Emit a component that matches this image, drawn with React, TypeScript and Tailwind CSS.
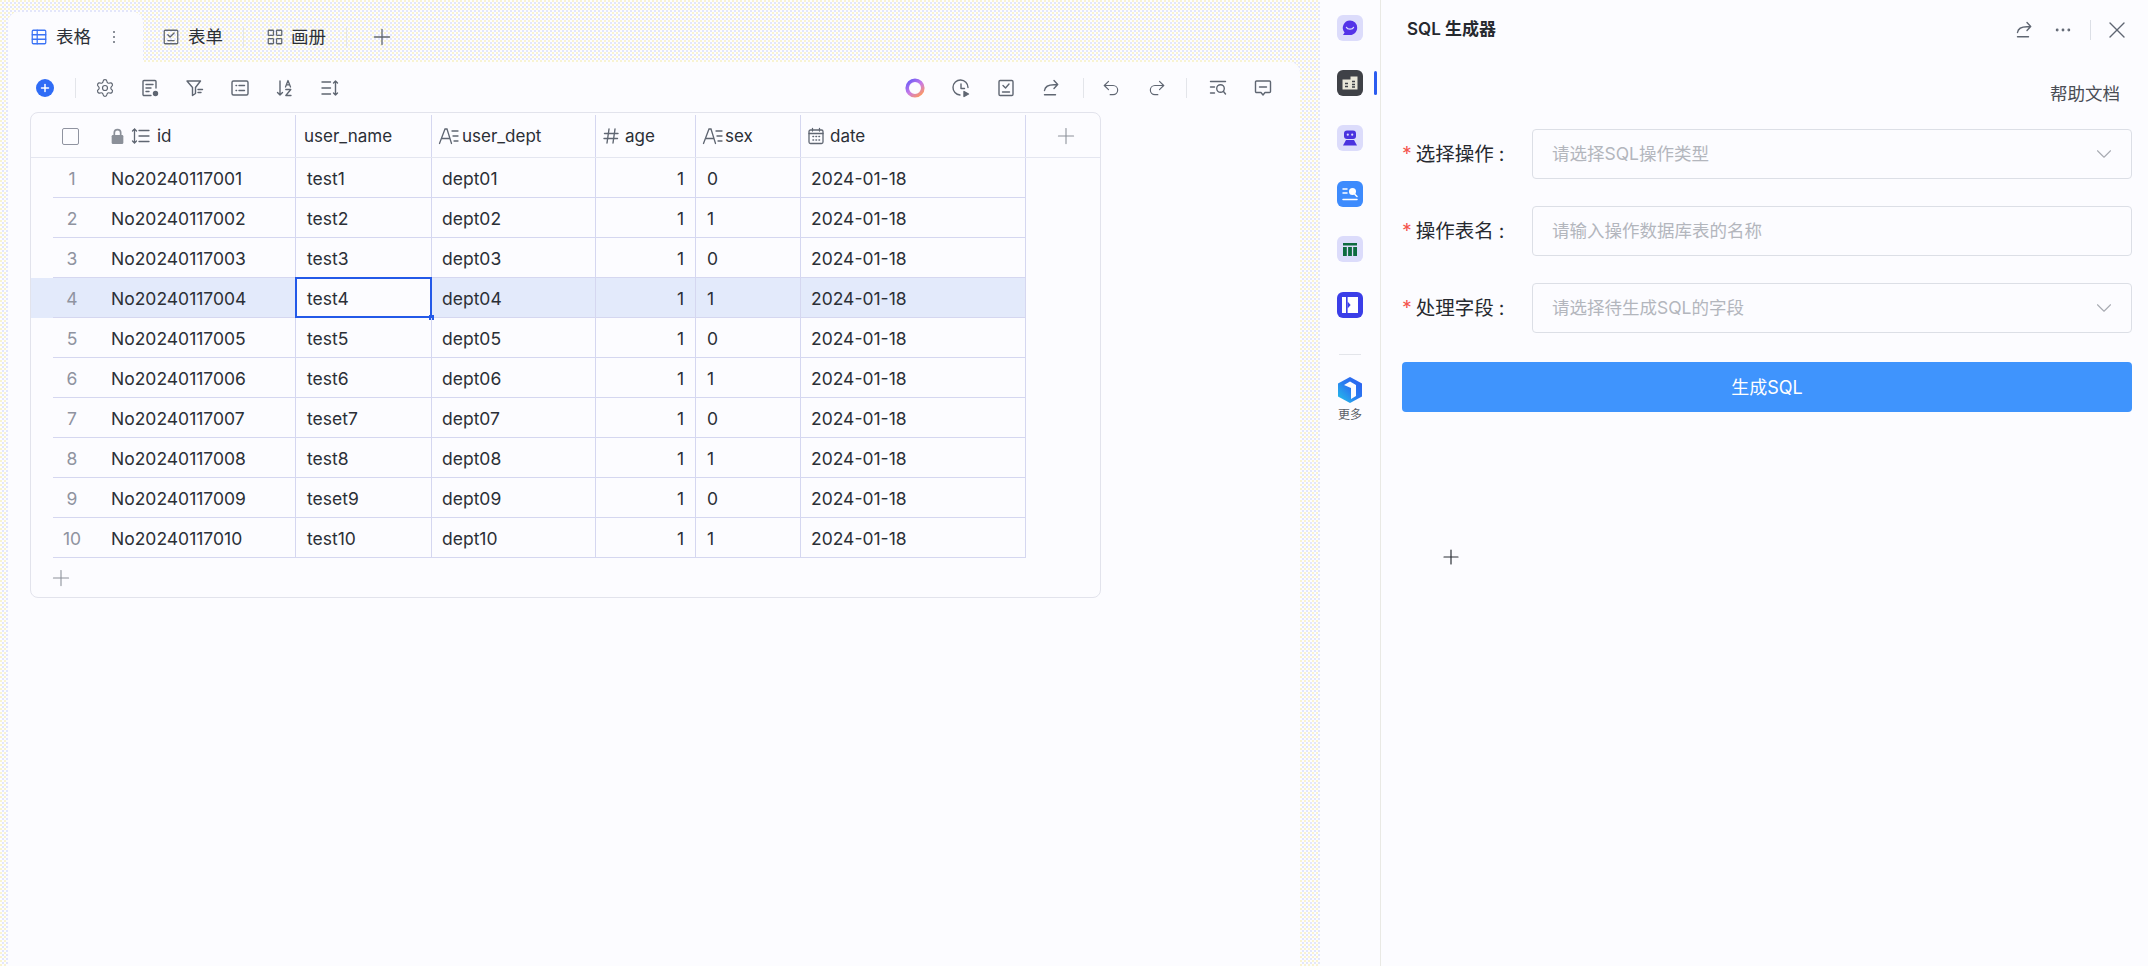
import React from "react";
import { ChevronDown, Ellipsis, Plus, Redo2, Settings, Undo2, X } from "lucide-react";

const FONT = "[font-family:Inter,'Noto_Sans_CJK_SC',sans-serif]";
const DITHER = "bg-[conic-gradient(#fdfdff_25%,#e3e6fb_0_50%,#fdfdff_0_75%,#f8f3d2_0)] bg-[length:4px_4px]";

function Ic({ children, size = 20, className = "text-[#5f6672]" }: { children: React.ReactNode; size?: number; className?: string }) {
  return (
    <svg width={size} height={size} viewBox="0 0 20 20" fill="none" stroke="currentColor" strokeWidth="1.4" strokeLinecap="round" strokeLinejoin="round" className={className + " shrink-0"}>
      {children}
    </svg>
  );
}

const TableIcon = () => (
  <Ic size={18} className="text-[#3b73f5]">
    <rect x="2.5" y="2.5" width="15" height="15" rx="1.2" />
    <path d="M2.5 7.5h15M2.5 12.5h15M8 2.5v15" />
  </Ic>
);
const FormIcon = () => (
  <Ic size={18}>
    <rect x="2.5" y="2.5" width="15" height="15" rx="1.2" />
    <path d="M6.5 7.5l2.5 2.5 4.5-4.5M6.5 14h7" />
  </Ic>
);
const GalleryIcon = () => (
  <Ic size={18}>
    <rect x="2.5" y="2.5" width="5.8" height="5.8" rx="0.8" />
    <rect x="11.7" y="2.5" width="5.8" height="5.8" rx="0.8" />
    <rect x="2.5" y="11.7" width="5.8" height="5.8" rx="0.8" />
    <rect x="11.7" y="11.7" width="5.8" height="5.8" rx="0.8" />
  </Ic>
);
const FieldConfig = () => (
  <Ic>
    <path d="M11 17.5H4a1 1 0 0 1-1-1v-13a1 1 0 0 1 1-1h11a1 1 0 0 1 1 1V10M6 6.5h7M6 10h5M6 13.5h3" />
    <circle cx="15.5" cy="15.500" r="2" fill="currentColor" />
  </Ic>
);
const FilterIcon = () => (
  <Ic>
    <path d="M2 3h13.500L10.500 9.500v6L7.500 17.500V9.500zM13 11.500h4.500M13 14.500h3" />
  </Ic>
);
const ListIcon = () => (
  <Ic>
    <rect x="2" y="3" width="16" height="14" rx="1.500" />
    <path d="M6 7.500h.6M6 12.500h.6M9 7.500h5.500M9 12.500h5.500" />
  </Ic>
);
const SortIcon = () => (
  <Ic>
    <path d="M5 3v14M2.500 14.500l2.500 2.500 2.500-2.500" />
    <path d="M10.500 9l2.500-6.500 2.500 6.500M11.500 6.800h3M10.800 11.500h5l-5 6h5.200" strokeWidth="1.3" />
  </Ic>
);
const RowHeight = () => (
  <Ic>
    <path d="M2 4h8.500M2 10h8.500M2 16h8.500M15.500 3v14M13.500 5l2-2 2 2M13.500 15l2 2 2-2" />
  </Ic>
);
const RingIcon = () => (
  <svg width="22" height="22" viewBox="0 0 22 22" className="shrink-0">
    <defs>
      <linearGradient id="ring" x1="0.1" y1="0" x2="0.9" y2="1">
        <stop offset="0" stopColor="#6e5cf6" />
        <stop offset="0.5" stopColor="#c77ae8" />
        <stop offset="1" stopColor="#ff9a5c" />
      </linearGradient>
    </defs>
    <circle cx="11" cy="11" r="7.800" fill="none" stroke="url(#ring)" strokeWidth="3.600" />
  </svg>
);
const HistoryPlay = () => (
  <Ic>
    <path d="M9 17a7.500 7.500 0 1 1 8-7.500M10 6v4.500h3.500" />
    <path d="M13 13.500l4.500 2.500-4.500 2.500z" fill="currentColor" />
  </Ic>
);
const CheckDoc = () => (
  <Ic>
    <rect x="3" y="2.500" width="14" height="15" rx="1.200" />
    <path d="M7 7.500l2.500 2.500 3.500-4M6.500 14h7" />
  </Ic>
);
const ShareIcon = ({ size = 20 }: { size?: number }) => (
  <Ic size={size}>
    <path d="M3.500 12.500c.5-3.500 4-5.800 9.500-5.800h3.500M13 2.500l3.700 4-3.700 4M3.500 16.800h11" />
  </Ic>
);
const SearchList = () => (
  <Ic>
    <path d="M2.500 3.500h15M2.500 9h4M2.500 15h4" />
    <circle cx="12.500" cy="10.500" r="3.800" />
    <path d="M15.500 13.500l2 2.500" />
  </Ic>
);
const CommentIcon = () => (
  <Ic>
    <path d="M3.500 3h13a1 1 0 0 1 1 1v9.500a1 1 0 0 1-1 1H12l-2 2.500-2-2.500H3.500a1 1 0 0 1-1-1V4a1 1 0 0 1 1-1zM6.500 9h7" />
  </Ic>
);
const TextType = () => (
  <svg width="22" height="18" viewBox="0 0 22 18" fill="none" stroke="#5f6672" strokeWidth="1.300" strokeLinecap="round" className="shrink-0">
    <path d="M1.500 16.500L7 2h2l4.500 14.500M4 11.500h7.500M14 4h6M15 9h5M16 14h4" />
  </svg>
);
const HashType = () => (
  <svg width="18" height="18" viewBox="0 0 18 18" fill="none" stroke="#5f6672" strokeWidth="1.400" strokeLinecap="round" className="shrink-0">
    <path d="M7 2L5 16M13 2l-2 14M2.500 6.500h13.500M2 11.500h13.500" />
  </svg>
);
const DateType = () => (
  <svg width="18" height="18" viewBox="0 0 18 18" fill="none" stroke="#5f6672" strokeWidth="1.300" strokeLinecap="round" className="shrink-0">
    <rect x="2" y="3" width="14" height="13.500" rx="1.500" />
    <path d="M5.500 1.500v2.500M12.500 1.500v2.500M2 6.500h14" />
    <path d="M6 9.500h.5M9 9.500h.5M12 9.500h.5M6 13h.5M9 13h.5M12 13h.5" strokeWidth="1.600" />
  </svg>
);
const IdSort = () => (
  <svg width="20" height="18" viewBox="0 0 20 18" fill="none" stroke="#5f6672" strokeWidth="1.300" strokeLinecap="round" className="shrink-0">
    <path d="M3.500 2v14M1.500 4l2-2 2 2M1.500 14l2 2 2-2M8 3.500h10M8 9h10M8 14.500h10" />
  </svg>
);
const Lock = () => (
  <svg width="15" height="17" viewBox="0 0 14 16" className="shrink-0">
    <path d="M4 7V4.500a3 3 0 0 1 6 0V7" fill="none" stroke="#8b9099" strokeWidth="1.600" />
    <rect x="1.500" y="6.500" width="11" height="8.500" rx="1.200" fill="#8b9099" />
  </svg>
);

const Vline = ({ className = "h-5" }: { className?: string }) => <div className={"w-px bg-[#e3e5ea] " + className} />;

const rows = [
  ["No20240117001", "test1", "dept01", "0"],
  ["No20240117002", "test2", "dept02", "1"],
  ["No20240117003", "test3", "dept03", "0"],
  ["No20240117004", "test4", "dept04", "1"],
  ["No20240117005", "test5", "dept05", "0"],
  ["No20240117006", "test6", "dept06", "1"],
  ["No20240117007", "teset7", "dept07", "0"],
  ["No20240117008", "test8", "dept08", "1"],
  ["No20240117009", "teset9", "dept09", "0"],
  ["No20240117010", "test10", "dept10", "1"],
];

function TabBar() {
  return (
    <div className="flex h-[62px] items-end pl-[8px] text-[17.500px] text-[#2b2f36]">
      <div className="flex h-[50px] w-[135px] items-center rounded-t-[10px] bg-[#fcfcff] pl-[22px]">
        <TableIcon />
        <span className="ml-[8px]">表格</span>
        <span className="ml-[22px] flex flex-col gap-[3px]">
          <i className="block h-[2px] w-[2px] bg-[#8b9099]" />
          <i className="block h-[2px] w-[2px] bg-[#8b9099]" />
          <i className="block h-[2px] w-[2px] bg-[#8b9099]" />
        </span>
      </div>
      <div className="flex h-[50px] items-center">
        <div className="ml-[19px] flex items-center gap-[8px]">
          <FormIcon />
          <span>表单</span>
        </div>
        <Vline className="ml-[20px] h-[20px]" />
        <div className="ml-[22px] flex items-center gap-[7px]">
          <GalleryIcon />
          <span>画册</span>
        </div>
        <Vline className="ml-[20px] h-[20px]" />
        <Plus size={26} strokeWidth={1.200} className="ml-[22px] text-[#5f6672]" />
      </div>
    </div>
  );
}

function Toolbar() {
  return (
    <div className="flex h-[51px] items-center pl-[28px] pr-[27px]">
      <div className="flex h-[18px] w-[18px] items-center justify-center rounded-full bg-[#2f6cf6]">
        <Plus size={12} strokeWidth={3} className="text-white" />
      </div>
      <Vline className="ml-[21px] h-[20px]" />
      <div className="ml-[19px] flex items-center gap-[25px]">
        <Settings size={20} strokeWidth={1.400} className="text-[#5f6672]" />
        <FieldConfig />
        <FilterIcon />
        <ListIcon />
        <SortIcon />
        <RowHeight />
      </div>
      <div className="ml-auto flex items-center">
        <RingIcon />
        <div className="ml-[25px] flex items-center gap-[25px]">
          <HistoryPlay />
          <CheckDoc />
          <ShareIcon />
        </div>
        <Vline className="ml-[22px] h-[20px]" />
        <Undo2 size={20} strokeWidth={1.400} className="ml-[17px] text-[#5f6672]" />
        <Redo2 size={20} strokeWidth={1.400} className="ml-[26px] text-[#5f6672]" />
        <Vline className="ml-[19px] h-[20px]" />
        <div className="ml-[21px] flex items-center gap-[25px]">
          <SearchList />
          <CommentIcon />
        </div>
      </div>
    </div>
  );
}

const colClass = ["w-[243px]", "w-[136px]", "w-[164px]", "w-[100px]", "w-[105px]", "w-[225px]"];
const vb = "border-r border-[#d5d7f0]";
const hb = "border-b border-[#d5d7e3]";

function TableGrid() {
  return (
    <div className="ml-[22px] mt-[-1px] w-[1071px] overflow-hidden rounded-[8px] border border-[#e2e3ec] bg-[#fcfcff] text-[17px] leading-none text-[#2b2f36]">
      <div className="flex h-[45px] border-b border-[#e4e6f0] pt-[2px]">
        <div className="w-[22px] shrink-0" />
        <div className={colClass[0] + " flex shrink-0 items-center " + vb}>
          <div className="ml-[9px] h-[17px] w-[17px] rounded-[2px] border border-[#8f93a0]" />
          <div className="ml-[31px] flex items-center gap-[6px]">
            <Lock />
            <IdSort />
            <span>id</span>
          </div>
        </div>
        <div className={colClass[1] + " flex shrink-0 items-center pl-[8px] " + vb}>user_name</div>
        <div className={colClass[2] + " flex shrink-0 items-center gap-[2px] pl-[6px] " + vb}>
          <TextType />
          <span>user_dept</span>
        </div>
        <div className={colClass[3] + " flex shrink-0 items-center gap-[5px] pl-[6px] " + vb}>
          <HashType />
          <span>age</span>
        </div>
        <div className={colClass[4] + " flex shrink-0 items-center gap-[1px] pl-[6px] " + vb}>
          <TextType />
          <span>sex</span>
        </div>
        <div className={colClass[5] + " flex shrink-0 items-center gap-[5px] pl-[6px] " + vb}>
          <DateType />
          <span>date</span>
        </div>
        <div className="flex flex-1 items-center justify-center pl-[5px]">
          <Plus size={26} strokeWidth={1} className="text-[#8b9099]" />
        </div>
      </div>
      {rows.map((r, i) => {
        const active = i === 3;
        return (
          <div key={r[0]} className={"flex h-[40px] w-[995px] text-[17.500px] " + (active ? "bg-[#e3eafb]" : "")}>
            <div className="w-[22px] shrink-0" />
            <div className={colClass[0] + " flex shrink-0 pt-[2px] " + hb + " " + vb}>
              <div className="flex w-[38px] items-center justify-center text-[#8f93a0]">{i + 1}</div>
              <div className="ml-[20px] flex items-center">{r[0]}</div>
            </div>
            <div className={colClass[1] + " relative flex shrink-0 items-center pl-[11px] pt-[2px] " + hb + " " + vb + (active ? " bg-[#fcfcff]" : "")}>
              {r[1]}
              {active && (
                <div className="absolute inset-x-[-1px] bottom-[-1px] top-[-1px] border-2 border-[#2359e8]">
                  <div className="absolute bottom-[-4px] right-[-4px] h-[5px] w-[5px] bg-[#2359e8]" />
                </div>
              )}
            </div>
            <div className={colClass[2] + " flex shrink-0 items-center pl-[10px] pt-[2px] " + hb + " " + vb}>{r[2]}</div>
            <div className={colClass[3] + " flex shrink-0 items-center justify-end pr-[11px] pt-[2px] " + hb + " " + vb}>1</div>
            <div className={colClass[4] + " flex shrink-0 items-center pl-[11px] pt-[2px] " + hb + " " + vb}>{r[3]}</div>
            <div className={colClass[5] + " flex shrink-0 items-center pl-[10px] pt-[2px] " + hb + " " + vb}>2024-01-18</div>
          </div>
        );
      })}
      <div className="flex h-[39px] items-center pl-[17px]">
        <Plus size={26} strokeWidth={1} className="text-[#8b9099]" />
      </div>
    </div>
  );
}

function Field({ label, placeholder, select }: { label: string; placeholder: string; select?: boolean }) {
  return (
    <div className="flex h-[50px] items-center">
      <div className="flex w-[130px] shrink-0 items-center text-[19.500px] text-[#26292f]">
        <span className="mr-[4px] text-[#f4554f]">*</span>
        <span>{label}</span>
        <span className="ml-[5px]">:</span>
      </div>
      <div className="flex h-[50px] flex-1 items-center justify-between rounded-[4px] border border-[#dcdfe6] pl-[19px] pr-[14px] text-[17.500px] text-[#b3b6bd]">
        <span>{placeholder}</span>
        {select && <ChevronDown size={26} strokeWidth={1} className="text-[#a8abb2]" />}
      </div>
    </div>
  );
}

function SideIcon({ children, bg, active }: { children: React.ReactNode; bg: string; active?: boolean }) {
  return (
    <div className="relative flex h-[55.400px] w-full items-center justify-center">
      <div className={"flex h-[26px] w-[26px] items-center justify-center rounded-[6px] " + bg}>{children}</div>
      {active && <div className="absolute right-[3px] top-[16px] h-[24px] w-[3px] rounded-[2px] bg-[#2b5cf0]" />}
    </div>
  );
}

function Sidebar() {
  return (
    <div className="flex w-[60px] shrink-0 flex-col items-center bg-[#fcfcff] pt-0">
      <SideIcon bg="bg-[#dcdcfb]">
        <svg width="18" height="18" viewBox="0 0 18 18">
          <path d="M9 1.500a7.200 7.200 0 0 1 7.200 7.200c0 4-3.200 7.300-7.200 7.300H2l1.600-2.600A7.200 7.200 0 0 1 9 1.500z" fill="#5434e8" />
          <path d="M5.500 8.500c1 2.200 6 2.200 7 0" fill="none" stroke="#dcdcfb" strokeWidth="1.400" strokeLinecap="round" />
        </svg>
      </SideIcon>
      <SideIcon bg="bg-[#3f4147]" active>
        <svg width="18" height="18" viewBox="0 0 18 18">
          <path d="M1.500 5.500h8v-3h7v13h-15z" fill="#e9e6d8" />
          <path d="M4 9.500h3M4 12.500h3M11 7.500h3M11 10.500h3M11 13h3" stroke="#3f4147" strokeWidth="1.600" />
        </svg>
      </SideIcon>
      <SideIcon bg="bg-[#dcdcfb]">
        <svg width="18" height="18" viewBox="0 0 18 18">
          <rect x="3" y="1.500" width="12" height="8.500" rx="3" fill="#4a33df" />
          <circle cx="6.800" cy="5.700" r="1.100" fill="#dcdcfb" />
          <circle cx="11.200" cy="5.700" r="1.100" fill="#dcdcfb" />
          <path d="M5 11h8l3 5.500H2z" fill="#4a33df" />
        </svg>
      </SideIcon>
      <SideIcon bg="bg-[#3d8bfd]">
        <svg width="20" height="20" viewBox="0 0 20 20" fill="none" stroke="#fff" strokeWidth="1.500" strokeLinecap="round">
          <path d="M3 5h4M3 9h4M3 15.500h14" />
          <circle cx="12.500" cy="7.500" r="3.500" fill="#fff" stroke="none" />
          <path d="M15 10.500l2 2" />
        </svg>
      </SideIcon>
      <SideIcon bg="bg-[#dcdcfb]">
        <svg width="18" height="18" viewBox="0 0 18 18" fill="#0d6b3f">
          <rect x="2" y="3" width="14" height="2.500" />
          <rect x="2" y="7" width="3.800" height="9" />
          <rect x="7.100" y="7" width="3.800" height="9" />
          <rect x="12.200" y="7" width="3.800" height="9" />
        </svg>
      </SideIcon>
      <SideIcon bg="bg-[#3b3ee8]">
        <svg width="20" height="20" viewBox="0 0 20 20">
          <rect x="2" y="2" width="16" height="16" fill="#fff" />
          <rect x="6" y="2" width="1.600" height="16" fill="#3b3ee8" />
          <path d="M7.600 6.500l3 3.500-3 3.500z" fill="#3b3ee8" />
        </svg>
      </SideIcon>
      <div className="mt-[22px] h-px w-[22px] bg-[#e3e5ea]" />
      <svg width="26" height="28" viewBox="0 0 26 28" className="mt-[21px]">
        <defs>
          <linearGradient id="cube" x1="0" y1="1" x2="1" y2="0">
            <stop offset="0" stopColor="#23c6e8" />
            <stop offset="0.5" stopColor="#2a7cf0" />
            <stop offset="1" stopColor="#2d5cf0" />
          </linearGradient>
        </defs>
        <path d="M13 1l12 6.500v13L13 27 1 20.500v-13z" fill="url(#cube)" />
        <path d="M7 9l6-3.500 6 3.500v11l-5 3V12z" fill="#fcfcff" />
      </svg>
      <div className="mt-[2px] text-[12px] text-[#5a5e66]">更多</div>
    </div>
  );
}

export default function App() {
  return (
    <div className={"flex h-[966px] w-[2148px] overflow-hidden " + DITHER + " " + FONT}>
      <main className="flex w-[1300px] shrink-0 flex-col">
        <TabBar />
        <div className="ml-[8px] flex-1 rounded-tr-[10px] bg-[#fcfcff]">
          <Toolbar />
          <TableGrid />
        </div>
      </main>
      <div className="ml-[20px] flex flex-1">
        <Sidebar />
        <section className="flex-1 border-l border-[#e9e9e4] bg-[#fcfcff] pl-[21px] pr-[16px]">
          <div className="flex h-[60px] items-center">
            <span className="ml-[5px] text-[17px] font-semibold text-[#26292f]">SQL 生成器</span>
            <div className="ml-auto flex items-center">
              <ShareIcon size={20} />
              <Ellipsis size={20} strokeWidth={1.400} className="ml-[19px] text-[#5f6672]" />
              <div className="ml-[17px] h-[20px] w-px bg-[#dcdfe6]" />
              <X size={28} strokeWidth={1.200} className="ml-[12px] mr-[1px] text-[#5f6672]" />
            </div>
          </div>
          <div className="mt-[21px] flex justify-end pr-[12px] text-[17.500px] text-[#4a4d55]">帮助文档</div>
          <div className="mt-[22px] flex flex-col gap-[27px]">
            <Field label="选择操作" placeholder="请选择SQL操作类型" select />
            <Field label="操作表名" placeholder="请输入操作数据库表的名称" />
            <Field label="处理字段" placeholder="请选择待生成SQL的字段" select />
          </div>
          <div className="mt-[29px] flex h-[50px] items-center justify-center rounded-[4px] bg-[#3f94fd] text-[18px] text-white">生成SQL</div>
          <Plus size={24} strokeWidth={1.200} className="ml-[37px] mt-[133px] text-[#2b2f36]" />
        </section>
      </div>
    </div>
  );
}
